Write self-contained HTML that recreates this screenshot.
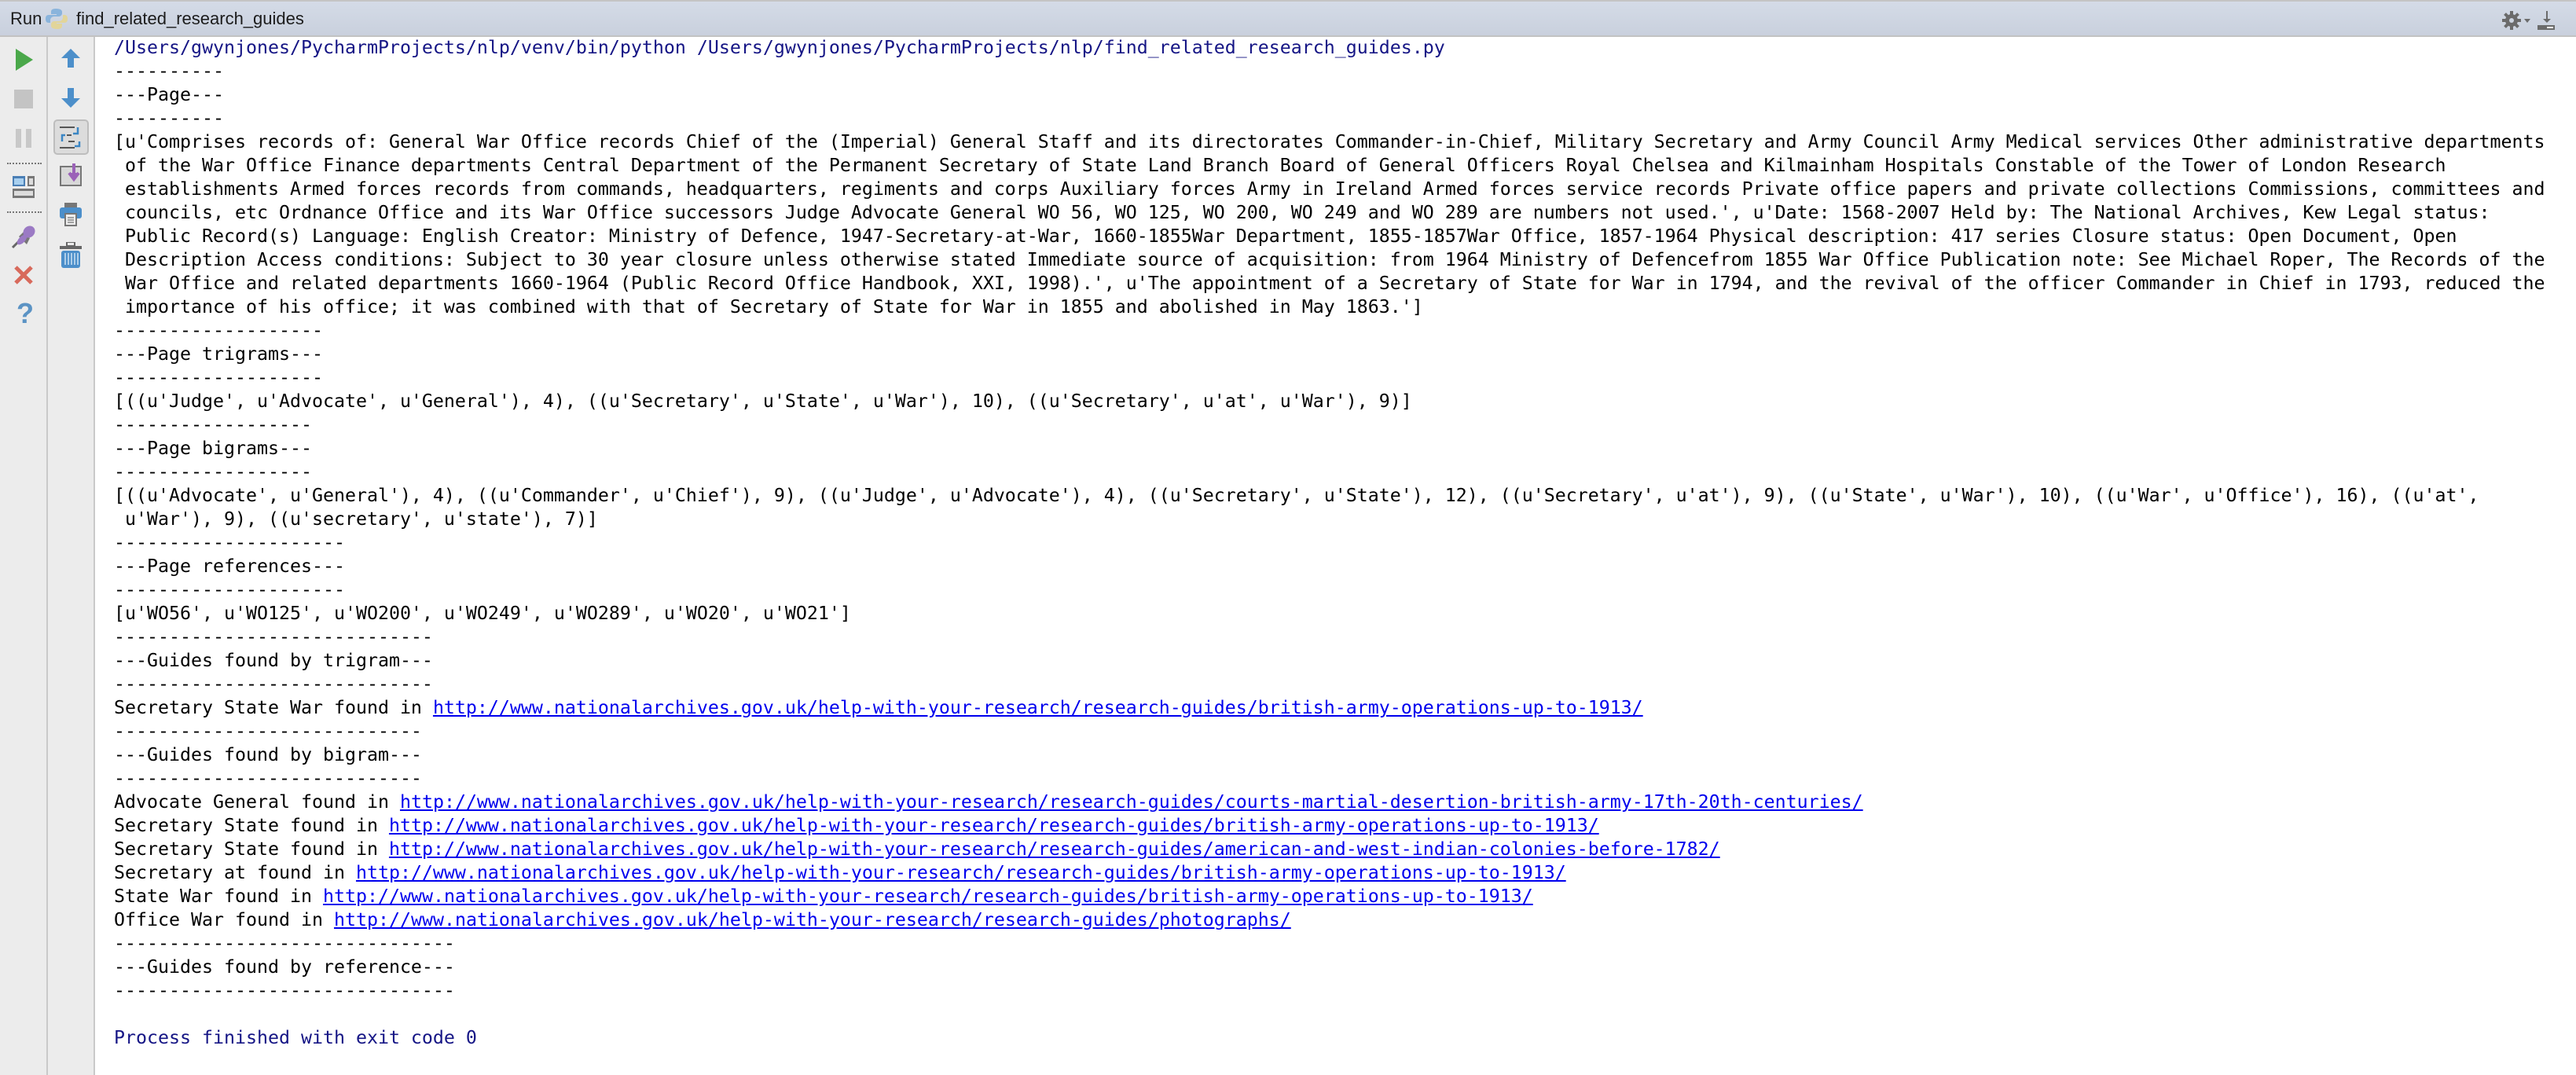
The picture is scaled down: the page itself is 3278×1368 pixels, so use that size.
<!DOCTYPE html>
<html><head><meta charset="utf-8"><style>
*{margin:0;padding:0;box-sizing:border-box}
html,body{width:3278px;height:1368px;overflow:hidden;background:#fff}
#hdr{position:absolute;left:0;top:0;width:3278px;height:47px;background:linear-gradient(#d4dbe7,#c9d0dd);border-top:2px solid #c4c4c4;border-bottom:2px solid #c2c2c2}
#hdr .t{position:absolute;top:9px;font:22px "Liberation Sans",sans-serif;color:#1c1c1c}
#c1{position:absolute;left:0;top:47px;width:61px;height:1321px;background:#ececec;border-right:2px solid #c9c9c9}
#c2{position:absolute;left:61px;top:47px;width:60px;height:1321px;background:#ececec;border-right:2px solid #c9c9c9}
svg.i{position:absolute}
#con{position:absolute;left:145px;top:46px;font:23.25px/30px "DejaVu Sans Mono","Liberation Mono",monospace;color:#000;white-space:pre}
.b{color:#151585}
a{color:#0000ee;text-decoration:underline}
</style></head><body>
<div id="hdr">
<span class="t" style="left:13px">Run</span>
<svg class="i" style="left:58px;top:8px" width="28" height="28" viewBox="0 0 28 28"><path d="M13 1c-5 0-6 2-6 4v3h7v1H4c-3 0-4 2-4 5s1 5 4 5h2v-3c0-3 2-5 5-5h6c2 0 4-2 4-4V5c0-2-2-4-8-4z" fill="#8ab4dc"/><path d="M15 27c5 0 6-2 6-4v-3h-7v-1h10c3 0 4-2 4-5s-1-5-4-5h-2v3c0 3-2 5-5 5h-6c-2 0-4 2-4 4v2c0 2 2 4 8 4z" fill="#e2d59a"/></svg>
<span class="t" style="left:97px">find_related_research_guides</span>
<svg class="i" style="left:3183px;top:10px" width="70" height="28" viewBox="0 0 70 28"><g fill="#6b6b6b"><circle cx="13" cy="14" r="8"/><rect x="11" y="2" width="4" height="24"/><rect x="1" y="12" width="24" height="4"/><rect x="11" y="2" width="4" height="24" transform="rotate(45 13 14)"/><rect x="11" y="2" width="4" height="24" transform="rotate(-45 13 14)"/><path d="M29 12h8l-4 5z"/><rect x="57" y="2" width="2" height="12"/><path d="M53 12h10l-5 5z"/><rect x="46" y="20" width="22" height="6"/></g><circle cx="13" cy="14" r="3" fill="#cdd4e0"/><rect x="58" y="22" width="8" height="2" fill="#fff"/></svg>
</div>
<div id="c1"></div><div id="c2"></div>
<!-- column 1 -->
<svg class="i" style="left:20px;top:62px" width="22" height="28"><path d="M0 0L22 14L0 28z" fill="#4aa84a"/></svg>
<div style="position:absolute;left:18px;top:114px;width:24px;height:24px;background:#c4c4c4"></div>
<div style="position:absolute;left:20px;top:164px;width:7px;height:24px;background:#c8c8c8"></div>
<div style="position:absolute;left:33px;top:164px;width:7px;height:24px;background:#c8c8c8"></div>
<div style="position:absolute;left:9px;top:207px;width:44px;border-top:2px dotted #777"></div>
<svg class="i" style="left:16px;top:224px" width="28" height="28"><rect x="0" y="0" width="16" height="13" fill="#4a7fb5"/><rect x="2" y="3" width="12" height="8" fill="#a9d0ef"/><rect x="19" y="0" width="9" height="13" fill="#777"/><rect x="21" y="3" width="5" height="8" fill="#ddd"/><rect x="0" y="16" width="28" height="12" fill="#777"/><rect x="2" y="19" width="24" height="6" fill="#ddd"/></svg>
<div style="position:absolute;left:9px;top:269px;width:44px;border-top:2px dotted #777"></div>
<svg class="i" style="left:14px;top:285px" width="32" height="32"><path d="M2 30L12 20" stroke="#666" stroke-width="3"/><path d="M10 16L20 26L24 18L16 10z" fill="#777"/><ellipse cx="23" cy="10" rx="7" ry="8" transform="rotate(45 23 10)" fill="#9b7ac4"/><ellipse cx="14" cy="20" rx="4" ry="8" transform="rotate(45 14 20)" fill="#9b7ac4"/></svg>
<svg class="i" style="left:18px;top:338px" width="24" height="24"><path d="M2 2L22 22M22 2L2 22" stroke="#d86a5c" stroke-width="5"/></svg>
<div style="position:absolute;left:21px;top:378px;font:bold 36px 'Liberation Sans',sans-serif;color:#5b93c4">?</div>
<!-- column 2 -->
<svg class="i" style="left:78px;top:62px" width="24" height="24"><path d="M12 0L24 12H16V24H8V12H0z" fill="#4c8fca"/></svg>
<svg class="i" style="left:78px;top:112px" width="24" height="25"><path d="M12 25L24 13H16V0H8V13H0z" fill="#4c8fca"/></svg>
<div style="position:absolute;left:68px;top:152px;width:45px;height:45px;background:#dcdcdc;border:2px solid #bdbdbd;border-radius:5px"></div>
<svg class="i" style="left:75px;top:160px" width="32" height="30"><g stroke="#555" stroke-width="2"><path d="M1 2H20M1 28H20M10 12H16M12 20H20"/></g><g stroke="#3a86c4" stroke-width="2.5" fill="none"><path d="M4 20V12H8M24 2V10H18M26 20V26H20"/></g></svg>
<svg class="i" style="left:76px;top:208px" width="30" height="30"><rect x="1" y="4" width="26" height="24" fill="#d8d8d8" stroke="#777" stroke-width="2"/><path d="M18 0V14M12 12L18 20L24 12" stroke="#9b62b8" stroke-width="4" fill="#9b62b8"/></svg>
<svg class="i" style="left:76px;top:258px" width="28" height="30"><rect x="6" y="0" width="16" height="6" fill="#777"/><rect x="0" y="6" width="28" height="14" rx="3" fill="#4c8fca"/><rect x="6" y="13" width="16" height="17" fill="#777"/><rect x="8" y="15" width="12" height="13" fill="#eee"/><path d="M10 19H18M10 22H18M10 25H18" stroke="#555"/></svg>
<svg class="i" style="left:76px;top:308px" width="28" height="34"><rect x="9" y="0" width="10" height="5" fill="none" stroke="#666" stroke-width="2"/><rect x="0" y="5" width="28" height="4" fill="#666"/><rect x="2" y="11" width="24" height="22" rx="3" fill="#4c8fca"/><path d="M7 14V29M11 14V29M15 14V29M19 14V29M23 14V29" stroke="#cfe3f3" stroke-width="1.5"/></svg>
<div id="con"><span class="b">/Users/gwynjones/PycharmProjects/nlp/venv/bin/python /Users/gwynjones/PycharmProjects/nlp/find_related_research_guides.py</span>
----------
---Page---
----------
[u'Comprises records of: General War Office records Chief of the (Imperial) General Staff and its directorates Commander-in-Chief, Military Secretary and Army Council Army Medical services Other administrative departments
 of the War Office Finance departments Central Department of the Permanent Secretary of State Land Branch Board of General Officers Royal Chelsea and Kilmainham Hospitals Constable of the Tower of London Research
 establishments Armed forces records from commands, headquarters, regiments and corps Auxiliary forces Army in Ireland Armed forces service records Private office papers and private collections Commissions, committees and
 councils, etc Ordnance Office and its War Office successors Judge Advocate General WO 56, WO 125, WO 200, WO 249 and WO 289 are numbers not used.', u'Date: 1568-2007 Held by: The National Archives, Kew Legal status:
 Public Record(s) Language: English Creator: Ministry of Defence, 1947-Secretary-at-War, 1660-1855War Department, 1855-1857War Office, 1857-1964 Physical description: 417 series Closure status: Open Document, Open
 Description Access conditions: Subject to 30 year closure unless otherwise stated Immediate source of acquisition: from 1964 Ministry of Defencefrom 1855 War Office Publication note: See Michael Roper, The Records of the
 War Office and related departments 1660-1964 (Public Record Office Handbook, XXI, 1998).', u'The appointment of a Secretary of State for War in 1794, and the revival of the officer Commander in Chief in 1793, reduced the
 importance of his office; it was combined with that of Secretary of State for War in 1855 and abolished in May 1863.']
-------------------
---Page trigrams---
-------------------
[((u'Judge', u'Advocate', u'General'), 4), ((u'Secretary', u'State', u'War'), 10), ((u'Secretary', u'at', u'War'), 9)]
------------------
---Page bigrams---
------------------
[((u'Advocate', u'General'), 4), ((u'Commander', u'Chief'), 9), ((u'Judge', u'Advocate'), 4), ((u'Secretary', u'State'), 12), ((u'Secretary', u'at'), 9), ((u'State', u'War'), 10), ((u'War', u'Office'), 16), ((u'at',
 u'War'), 9), ((u'secretary', u'state'), 7)]
---------------------
---Page references---
---------------------
[u'WO56', u'WO125', u'WO200', u'WO249', u'WO289', u'WO20', u'WO21']
-----------------------------
---Guides found by trigram---
-----------------------------
Secretary State War found in <a>http://www.nationalarchives.gov.uk/help-with-your-research/research-guides/british-army-operations-up-to-1913/</a>
----------------------------
---Guides found by bigram---
----------------------------
Advocate General found in <a>http://www.nationalarchives.gov.uk/help-with-your-research/research-guides/courts-martial-desertion-british-army-17th-20th-centuries/</a>
Secretary State found in <a>http://www.nationalarchives.gov.uk/help-with-your-research/research-guides/british-army-operations-up-to-1913/</a>
Secretary State found in <a>http://www.nationalarchives.gov.uk/help-with-your-research/research-guides/american-and-west-indian-colonies-before-1782/</a>
Secretary at found in <a>http://www.nationalarchives.gov.uk/help-with-your-research/research-guides/british-army-operations-up-to-1913/</a>
State War found in <a>http://www.nationalarchives.gov.uk/help-with-your-research/research-guides/british-army-operations-up-to-1913/</a>
Office War found in <a>http://www.nationalarchives.gov.uk/help-with-your-research/research-guides/photographs/</a>
-------------------------------
---Guides found by reference---
-------------------------------

<span class="b">Process finished with exit code 0</span></div>
</body></html>
